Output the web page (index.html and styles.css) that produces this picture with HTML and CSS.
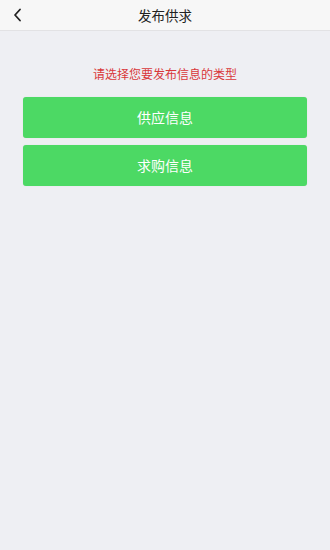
FILE: index.html
```html
<!DOCTYPE html>
<html lang="zh-CN">
<head>
    <meta charset="UTF-8">
    <meta name="viewport" content="width=device-width, initial-scale=1.0">
    <title>发布供求</title>
    <link rel="stylesheet" href="styles.css">
</head>
<body>
    <!-- Header -->
    <div class="header">
        <span class="back-btn">
            <svg width="12" height="14" viewBox="0 0 12 14"><path d="M8 1.5 L3 7 L8 12.5" fill="none" stroke="#222" stroke-width="1.8" stroke-linecap="round" stroke-linejoin="round"/></svg>
        </span>
        <div class="header-title">发布供求</div>
    </div>

    <div class="content">
        <div class="tip">请选择您要发布信息的类型</div>
        <button class="type-button">供应信息</button>
        <button class="type-button">求购信息</button>
    </div>
</body>
</html>
```

FILE: styles.css
```css
* {
    margin: 0;
    padding: 0;
    box-sizing: border-box;
    font-family: "Noto Sans CJK SC", "Noto Sans", sans-serif;
}

body {
    background-color: #eeeff3;
    min-height: 550px;
}

.header {
    position: relative;
    height: 31px;
    background-color: #f7f7f7;
    border-bottom: 1px solid #e2e2e4;
    display: flex;
    align-items: center;
    justify-content: center;
}

.back-btn {
    position: absolute;
    left: 12px;
    top: 8px;
    display: flex;
}

.header-title {
    font-size: 13.5px;
    color: #222;
}

.content {
    padding: 34px 23px 0;
    display: flex;
    flex-direction: column;
}

.tip {
    text-align: center;
    font-size: 12px;
    color: #d9373a;
    line-height: 18px;
    margin-bottom: 14px;
}

.type-button {
    height: 41px;
    padding-bottom: 2px;
    background-color: #4cd964;
    border: none;
    border-radius: 3px;
    color: #fff;
    font-size: 14px;
    margin-bottom: 7px;
    box-shadow: 0 0 1px rgba(0, 0, 0, 0.15);
}
```
